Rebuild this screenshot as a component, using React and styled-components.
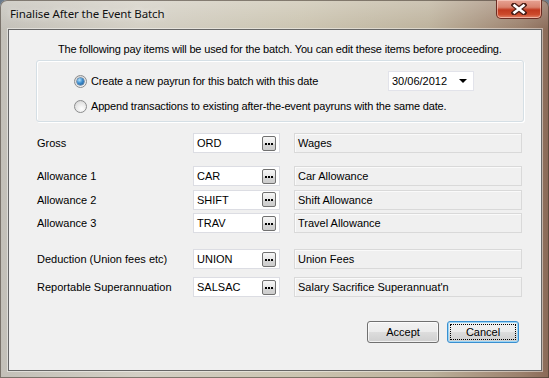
import React from "react";
import styled, { createGlobalStyle } from "styled-components";

const GlobalStyle = createGlobalStyle`
  html, body {
    margin: 0;
    padding: 0;
    background: #6b7b8c;
  }
  body {
    font-family: "Liberation Sans", Arial, sans-serif;
    font-size: 11px;
    color: #000;
  }
`;

const Window = styled.div`
  width: 549px;
  height: 378px;
  box-sizing: border-box;
  display: flex;
  flex-direction: column;
  padding: 0 7px 7px 8px;
  border-radius: 7px 7px 0 0;
  background:
    linear-gradient(180deg, rgba(255, 255, 255, 0.25) 0, rgba(255, 255, 255, 0) 30px),
    linear-gradient(90deg, #c3c0b8 0%, #d3cfc4 25%, #cbc4b0 55%, #bdb29c 78%, #9b806c 95%, #8a6a58 100%);
  box-shadow: inset 0 0 0 1px rgba(60, 50, 40, 0.55);
`;

const TitleBar = styled.div`
  height: 29px;
  display: flex;
  align-items: flex-start;
  justify-content: space-between;
`;

const Title = styled.div`
  font-family: "Noto Sans", "Liberation Sans", sans-serif;
  font-size: 11.5px;
  letter-spacing: -0.1px;
  padding: 6px 0 0 2px;
  color: #111;
  text-shadow: 0 0 6px rgba(255, 255, 255, 0.9);
`;

const CloseButton = styled.div`
  width: 46px;
  height: 19px;
  box-sizing: border-box;
  border: 1px solid #6b2c22;
  border-top: none;
  border-radius: 0 0 5px 5px;
  background: linear-gradient(180deg, #e7a394 0%, #d9826e 40%, #c1391f 55%, #cc4a2b 80%, #e2866b 100%);
  box-shadow: inset 0 0 0 1px rgba(255, 220, 210, 0.55);
  display: flex;
  align-items: center;
  justify-content: center;
`;

const Client = styled.div`
  flex: 1;
  display: flex;
  flex-direction: column;
  background: #f0f0f0;
  border: 1px solid #666;
  box-shadow: 0 0 0 1px rgba(255, 255, 255, 0.45);
  padding: 12px 0 0 27px;
`;

const Intro = styled.div`
  line-height: 14px;
  margin-left: 22px;
  white-space: nowrap;
  letter-spacing: -0.17px;
`;

const GroupBox = styled.div`
  width: 488px;
  box-sizing: border-box;
  margin-top: 4px;
  border: 1px solid #d5dfe5;
  border-radius: 3px;
  box-shadow: inset 1px 1px 0 #fff, 1px 1px 0 #fff;
  padding: 10px 49px 5px 37px;
  display: flex;
  flex-direction: column;
  gap: 5px;
`;

const RadioRow = styled.label`
  height: 20px;
  display: flex;
  align-items: center;
  gap: 4px;
  white-space: nowrap;
`;

const RadioText = styled.span`
  flex: 1;
  letter-spacing: -0.17px;
`;

const Radio = styled.span`
  width: 13px;
  height: 13px;
  box-sizing: border-box;
  border-radius: 50%;
  border: 1px solid #8b8c8d;
  background: radial-gradient(circle at 60% 70%, #ffffff 0%, #e4e4e4 60%, #c9c9c9 100%);
  display: flex;
  align-items: center;
  justify-content: center;

  &::after {
    content: "";
    display: ${(p) => (p.$checked ? "block" : "none")};
    width: 7px;
    height: 7px;
    border-radius: 50%;
    background: radial-gradient(circle at 35% 30%, #b6e2fb 0%, #3e8fd0 45%, #1b4f86 100%);
    box-shadow: 0 0 0 0.5px #1d4b7a;
  }
`;

const DatePicker = styled.div`
  width: 86px;
  height: 20px;
  box-sizing: border-box;
  background: #fff;
  border: 1px solid #e2e3ea;
  display: flex;
  align-items: center;
  padding: 0 4px 0 3px;
  justify-content: space-between;
`;

const Arrow = styled.span`
  width: 0;
  height: 0;
  border-left: 4px solid transparent;
  border-right: 4px solid transparent;
  border-top: 4px solid #000;
  margin-right: 2px;
`;

const FieldRow = styled.div`
  display: flex;
  align-items: center;
  height: 20px;
  margin-top: ${(p) => p.$gap}px;
`;

const FieldLabel = styled.div`
  width: 156px;
  padding-left: 1px;
  white-space: nowrap;
`;

const CodeBox = styled.div`
  width: 87px;
  height: 20px;
  box-sizing: border-box;
  background: #fff;
  border: 1px solid #dcdde3;
  display: flex;
  align-items: center;
  padding: 0 3px 0 3px;
`;

const CodeText = styled.span`
  flex: 1;
`;

const EllipsisButton = styled.span`
  width: 14px;
  height: 15px;
  box-sizing: border-box;
  border: 1px solid #707070;
  border-radius: 2px;
  background: linear-gradient(180deg, #f6f6f6 0%, #e6e6e6 50%, #d6d6d6 51%, #cdcdcd 100%);
  display: flex;
  align-items: center;
  justify-content: center;
  gap: 1px;
  padding-top: 1px;
`;

const Dot = styled.span`
  width: 2px;
  height: 2px;
  background: #000;
`;

const DescBox = styled.div`
  width: 228px;
  height: 20px;
  box-sizing: border-box;
  margin-left: 14px;
  background: #f0f0f0;
  border: 1px solid #d9d9d9;
  box-shadow: inset 1px 1px 0 #fafafa;
  display: flex;
  align-items: center;
  padding-left: 3px;
  white-space: nowrap;
`;

const ButtonBar = styled.div`
  display: flex;
  justify-content: flex-end;
  gap: 8px;
  margin-top: 24px;
  padding-right: 22px;
`;

const Button = styled.button`
  width: 72px;
  height: 22px;
  box-sizing: border-box;
  font-family: "Liberation Sans", Arial, sans-serif;
  font-size: 11px;
  color: #000;
  border: 1px solid ${(p) => (p.$default ? "#3a8fd0" : "#707070")};
  border-radius: 3px;
  background: linear-gradient(180deg, #f2f2f2 0%, #ebebeb 50%, #dddddd 51%, #cfcfcf 100%);
  box-shadow: ${(p) =>
    p.$default ? "inset 0 0 0 1px #9bd6f7" : "inset 0 0 0 1px rgba(255, 255, 255, 0.7)"};
  padding: 0;
  position: relative;

  &::after {
    content: "";
    display: ${(p) => (p.$default ? "block" : "none")};
    position: absolute;
    inset: 2px;
    border: 1px dotted #000;
  }
`;

const rows = [
  { label: "Gross", code: "ORD", desc: "Wages", gap: 11 },
  { label: "Allowance 1", code: "CAR", desc: "Car Allowance", gap: 13 },
  { label: "Allowance 2", code: "SHIFT", desc: "Shift Allowance", gap: 3.5 },
  { label: "Allowance 3", code: "TRAV", desc: "Travel Allowance", gap: 3.5 },
  { label: "Deduction (Union fees etc)", code: "UNION", desc: "Union Fees", gap: 16 },
  { label: "Reportable Superannuation", code: "SALSAC", desc: "Salary Sacrifice Superannuat'n", gap: 8 },
];

const CloseIcon = () => (
  <svg width="16" height="12" viewBox="0 0 16 12">
    <path d="M3 2 L13 10 M13 2 L3 10" stroke="#4a1d16" strokeWidth="5" strokeLinecap="square" />
    <path d="M3.5 2.5 L12.5 9.5 M12.5 2.5 L3.5 9.5" stroke="#fff" strokeWidth="2.6" strokeLinecap="square" />
  </svg>
);

const App = () => {
  return (
    <>
      <GlobalStyle />
      <Window>
        <TitleBar>
          <Title>Finalise After the Event Batch</Title>
          <CloseButton>
            <CloseIcon />
          </CloseButton>
        </TitleBar>
        <Client>
          <Intro>
            The following pay items will be used for the batch. You can edit these items before proceeding.
          </Intro>
          <GroupBox>
            <RadioRow>
              <Radio $checked />
              <RadioText>Create a new payrun for this batch with this date</RadioText>
              <DatePicker>
                <span>30/06/2012</span>
                <Arrow />
              </DatePicker>
            </RadioRow>
            <RadioRow>
              <Radio />
              <RadioText>Append transactions to existing after-the-event payruns with the same date.</RadioText>
            </RadioRow>
          </GroupBox>
          {rows.map((r) => (
            <FieldRow key={r.label} $gap={r.gap}>
              <FieldLabel>{r.label}</FieldLabel>
              <CodeBox>
                <CodeText>{r.code}</CodeText>
                <EllipsisButton>
                  <Dot />
                  <Dot />
                  <Dot />
                </EllipsisButton>
              </CodeBox>
              <DescBox>{r.desc}</DescBox>
            </FieldRow>
          ))}
          <ButtonBar>
            <Button>Accept</Button>
            <Button $default>Cancel</Button>
          </ButtonBar>
        </Client>
      </Window>
    </>
  );
};

export default App;
